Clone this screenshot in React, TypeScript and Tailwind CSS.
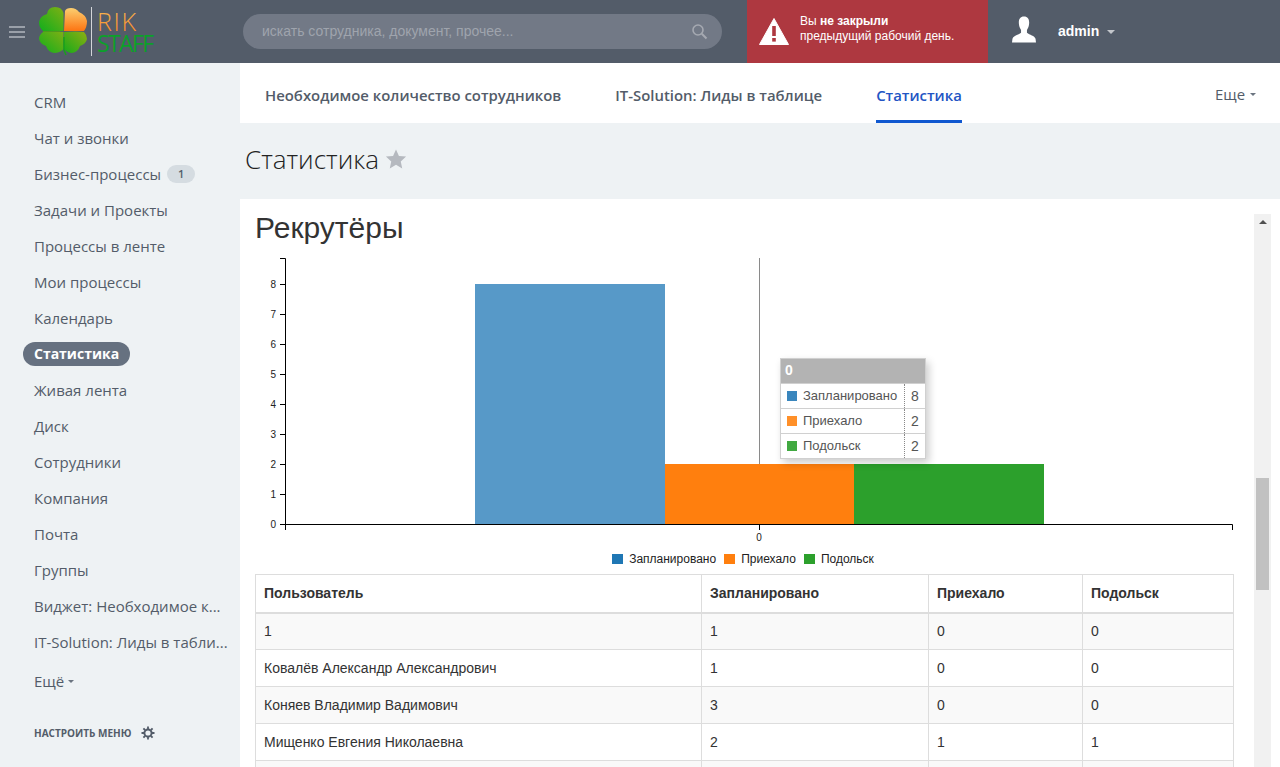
import React from "react";

const menu: { label: string; badge?: string; active?: boolean }[] = [
  { label: "CRM" },
  { label: "Чат и звонки" },
  { label: "Бизнес-процессы", badge: "1" },
  { label: "Задачи и Проекты" },
  { label: "Процессы в ленте" },
  { label: "Мои процессы" },
  { label: "Календарь" },
  { label: "Статистика", active: true },
  { label: "Живая лента" },
  { label: "Диск" },
  { label: "Сотрудники" },
  { label: "Компания" },
  { label: "Почта" },
  { label: "Группы" },
  { label: "Виджет: Необходимое к..." },
  { label: "IT-Solution: Лиды в табли..." },
];

const rows = [
  ["1", "1", "0", "0"],
  ["Ковалёв Александр Александрович", "1", "0", "0"],
  ["Коняев Владимир Вадимович", "3", "0", "0"],
  ["Мищенко Евгения Николаевна", "2", "1", "1"],
];

function Logo() {
  return (
    <svg width="124" height="58" viewBox="0 0 124 58" className="shrink-0">
      <defs>
        <linearGradient id="g1" x1="0" y1="1" x2="1" y2="0">
          <stop offset="0" stopColor="#0fae1c" />
          <stop offset="1" stopColor="#7fb014" />
        </linearGradient>
        <linearGradient id="g3" x1="0" y1="1" x2="1" y2="0">
          <stop offset="0" stopColor="#16ab1a" />
          <stop offset="1" stopColor="#8fae12" />
        </linearGradient>
        <linearGradient id="g2" x1="0" y1="0" x2="0" y2="1">
          <stop offset="0" stopColor="#fbcf70" />
          <stop offset="1" stopColor="#fd7412" />
        </linearGradient>
        <linearGradient id="g4" x1="0" y1="0" x2="0" y2="1">
          <stop offset="0" stopColor="#f9c25a" />
          <stop offset="1" stopColor="#f97f1c" />
        </linearGradient>
      </defs>
      <path d="M25.5 28 L25.5 10 Q24 4 17 4 Q10 4 9 11 Q2 13 1 19 Q1 25 5 28 Q12 29 25.5 28 Z" fill="url(#g1)" />
      <path d="M26 28 L27 8 Q28 5 33 5 Q38 5 41 9 Q48 12 49 18 Q49 24 46 28 Z" fill="url(#g2)" />
      <path d="M25.5 29 Q12 28 5 29 Q1 32 1 36 Q2 41 8 43 Q10 49 16 50 Q22 50 25.5 46 Z" fill="url(#g1)" />
      <path d="M26 29 Q38 28 46 29 Q49 32 49 36 Q48 41 42 43 Q40 49 34 50 Q30 50 26 46 Z" fill="url(#g3)" />
      <path d="M5 28.5 H22" stroke="#4f9a1d" strokeWidth="1" />
      <path d="M26 34 L26 47 L28 52" stroke="#17a31b" strokeWidth="1.5" fill="none" />
      <rect x="53" y="4" width="1" height="49" fill="#d3d5d9" />
      <text x="59" y="27.5" fontFamily="'Open Sans', sans-serif" fontSize="25" textLength="39" lengthAdjust="spacing" fill="url(#g4)" fontWeight="300">RIK</text>
      <text x="59" y="48.5" fontFamily="'Open Sans', sans-serif" fontSize="23" textLength="57" lengthAdjust="spacing" fill="#0ca02a">STAFF</text>
    </svg>
  );
}

function Chart() {
  const ys = [0, 1, 2, 3, 4, 5, 6, 7, 8];
  const yOf = (n: number) => 524 - n * 30;
  return (
    <svg width="1000" height="290" viewBox="240 258 1000 290" className="block" fontFamily="'Liberation Sans', sans-serif" fontSize="10">
      <rect x="475" y="284" width="190" height="240" fill="#5799c8" />
      <rect x="665" y="464" width="189" height="60" fill="#ff7f0e" />
      <rect x="854" y="464" width="190" height="60" fill="#2ca02c" />
      <line x1="759.5" y1="258" x2="759.5" y2="464" stroke="#8a8a8a" strokeWidth="1" />
      <path d="M280 258.5 H285.5 V524.5 H1232.5 V530" stroke="#000" strokeWidth="1" fill="none" />
      <path d="M285.5 524 V530 M759.5 524 V530" stroke="#000" strokeWidth="1" fill="none" />
      {ys.map((n) => (
        <g key={n}>
          <line x1="280" x2="285" y1={yOf(n) + 0.5} y2={yOf(n) + 0.5} stroke="#000" />
          <text x="276" y={yOf(n) + 3.5} textAnchor="end" fill="#222">{n}</text>
        </g>
      ))}
      <text x="759" y="541" textAnchor="middle" fill="#222">0</text>
    </svg>
  );
}

function Legend() {
  const items = [
    ["Запланировано", "bg-[#1f77b4]"],
    ["Приехало", "bg-[#ff7f0e]"],
    ["Подольск", "bg-[#2ca02c]"],
  ];
  return (
    <div className="mt-[4px] flex justify-center gap-[8px] pr-[3px] text-[12px] leading-[14px] text-[#222] h-[14px]">
      {items.map(([t, c]) => (
        <div key={t} className="flex items-center gap-[6px]">
          <span className={`w-[11px] h-[10px] ${c}`} />
          <span>{t}</span>
        </div>
      ))}
    </div>
  );
}

function Tooltip() {
  const items = [
    ["Запланировано", "8", "bg-[#3a86bd]"],
    ["Приехало", "2", "bg-[#ff9029]"],
    ["Подольск", "2", "bg-[#41a941]"],
  ];
  return (
    <div className="absolute left-[525px] top-[145px] w-[146px] border border-[#d0d0d0] bg-white shadow-[3px_4px_8px_rgba(0,0,0,0.2)] text-[13px] text-[#555]">
      <div className="h-[24px] bg-[#b3b3b3] px-[4px] text-white font-bold text-[14px] leading-[23px]">0</div>
      {items.map(([t, v, c]) => (
        <div key={t} className="flex h-[25px] border-t border-[#d0d0d0] items-center">
          <div className="w-[124px] flex items-center pl-[6px] gap-[6px] h-full border-r border-dotted border-[#888]">
            <span className={`w-[10px] h-[10px] ${c}`} />
            <span>{t}</span>
          </div>
          <div className="flex-1 pl-[6px] text-[14px]">{v}</div>
        </div>
      ))}
    </div>
  );
}

export default function App() {
  return (
    <div className="w-[1280px] h-[767px] overflow-hidden bg-[#eef2f4] font-['Liberation_Sans',sans-serif] flex flex-col">
      <header className="h-[63px] shrink-0 bg-[#535c69] flex items-center">
        <div className="w-[38px] pl-[9px] flex flex-col gap-[3px] shrink-0">
          <span className="block w-[16px] h-[2px] bg-[#9aa0a9]" />
          <span className="block w-[16px] h-[2px] bg-[#9aa0a9]" />
          <span className="block w-[16px] h-[2px] bg-[#9aa0a9]" />
        </div>
        <div className="w-[205px] shrink-0"><Logo /></div>
        <div className="w-[479px] h-[35px] shrink-0 rounded-full bg-[#727986] flex items-center justify-between pl-[19px] pr-[14px] text-[14px] text-[#9fa4ad]">
          <span>искать сотрудника, документ, прочее...</span>
          <svg width="17" height="17" viewBox="0 0 17 17" fill="none" stroke="#a5a9b1" strokeWidth="1.6">
            <circle cx="7" cy="7" r="5" />
            <path d="M10.8 10.8 L15.5 15.5" strokeWidth="2" />
          </svg>
        </div>
        <div className="ml-[25px] w-[241px] h-full shrink-0 bg-[#ae3840] flex items-center text-white text-[12px] leading-[15px]">
          <svg width="30" height="27" viewBox="0 0 30 27" className="ml-[12px] shrink-0">
            <path d="M15 0.5 L29.5 26.5 H0.5 Z" fill="#fff" stroke="#fff" strokeLinejoin="round" />
            <rect x="13.2" y="8" width="3.6" height="10" fill="#ae3840" />
            <rect x="13.2" y="20" width="3.6" height="3.6" fill="#ae3840" />
          </svg>
          <div className="ml-[11px] -mt-[6px]">
            <div>Вы <b>не закрыли</b></div>
            <div>предыдущий рабочий день.</div>
          </div>
        </div>
        <svg width="24" height="27" viewBox="0 0 26 28" className="ml-[24px] shrink-0 -mt-[4px]">
          <path d="M13 0 C8.5 0 7 3.5 7.5 8 C7.8 11 8.8 13 9.8 14.5 L9.8 17.5 C7 20 1.5 20.5 0.5 24 L0 28 H26 L25.5 24 C24.5 20.5 19 20 16.2 17.5 L16.2 14.5 C17.2 13 18.2 11 18.5 8 C19 3.5 17.5 0 13 0 Z" fill="#fff" />
        </svg>
        <span className="ml-[22px] text-[14px] font-bold text-white -mt-[1px]">admin</span>
        <span className="ml-[8px] w-0 h-0 border-x-[4px] border-x-transparent border-t-[4px] border-t-[#c3c6cb]" />
      </header>

      <div className="flex flex-1 min-h-0">
        <aside className="w-[240px] shrink-0 pt-[21px] font-['Open_Sans',sans-serif] text-[15px] text-[#535c69]">
          {menu.map((m) => (
            <div key={m.label} className="h-[36px] flex items-center pl-[34px] whitespace-nowrap">
              {m.active ? (
                <span className="-ml-[11px] -mt-[1px] h-[24px] px-[11px] rounded-full bg-[#667180] text-white font-bold text-[14px] leading-[23px]">{m.label}</span>
              ) : (
                <span>{m.label}</span>
              )}
              {m.badge && (
                <span className="ml-[6px] w-[28px] h-[18px] rounded-full bg-[#d5dce1] text-[11px] font-semibold text-center leading-[18px]">{m.badge}</span>
              )}
            </div>
          ))}
          <div className="mt-[3px] h-[36px] flex items-center pl-[34px]">
            <span>Ещё</span>
            <span className="ml-[4px] w-0 h-0 border-x-[3px] border-x-transparent border-t-[3px] border-t-[#6b7480]" />
          </div>
          <div className="mt-[24px] flex items-center pl-[34px] h-[20px] text-[10px] font-bold text-[#535c69]">
            <span>НАСТРОИТЬ МЕНЮ</span>
            <svg width="14" height="14" viewBox="0 0 14 14" className="ml-[10px]" fill="none" stroke="#535c69">
              <circle cx="7" cy="7" r="3.6" strokeWidth="2" />
              <path d="M7 0.5 V3 M7 11 V13.5 M0.5 7 H3 M11 7 H13.5 M2.4 2.4 L4 4 M10 10 L11.6 11.6 M2.4 11.6 L4 10 M10 4 L11.6 2.4" strokeWidth="1.8" />
            </svg>
          </div>
        </aside>

        <main className="flex-1 min-w-0 flex flex-col">
          <nav className="h-[60px] shrink-0 bg-white flex items-stretch pl-[25px] pr-[24px] font-['Open_Sans',sans-serif] text-[14.9px] font-semibold text-[#535c69]">
            <span className="flex items-center pt-[6px] border-b-2 border-transparent">Необходимое количество сотрудников</span>
            <span className="ml-[54px] flex items-center pt-[6px] border-b-2 border-transparent">IT-Solution: Лиды в таблице</span>
            <span className="ml-[54px] flex items-center pt-[7px] text-[#2255c4] border-b-[3px] border-[#1058d0]">Статистика</span>
            <span className="ml-auto font-normal flex items-center pt-[4px] border-b-2 border-transparent">
              Еще
              <span className="ml-[5px] w-0 h-0 border-x-[3px] border-x-transparent border-t-[3px] border-t-[#6b7480]" />
            </span>
          </nav>
          <div className="h-[76px] shrink-0 flex items-center pl-[5px] pb-[4px] font-['Open_Sans',sans-serif] text-[26px] font-light text-[#222]">
            <span>Статистика</span>
            <svg width="22" height="22" viewBox="0 0 24 24" className="ml-[6px]" fill="#b5b9bf">
              <path d="M12 1.5 L15.2 8.6 L23 9.4 L17.2 14.6 L18.8 22.3 L12 18.4 L5.2 22.3 L6.8 14.6 L1 9.4 L8.8 8.6 Z" />
            </svg>
          </div>
          <div className="flex-1 min-h-0 bg-white flex pl-[15px] pt-[14px] overflow-hidden">
            <div className="w-[979px] shrink-0 relative">
              <h1 className="text-[30px] leading-[30px] text-[#333] font-normal">Рекрутёры</h1>
              <div className="-ml-[15px] mt-[15px]"><Chart /></div>
              <Tooltip />
              <Legend />
              <table className="mt-[8px] w-[979px] border-collapse text-[14px] text-[#333] table-fixed">
                <colgroup>
                  <col className="w-[446px]" />
                  <col className="w-[227px]" />
                  <col className="w-[154px]" />
                  <col className="w-[151px]" />
                </colgroup>
                <thead>
                  <tr className="h-[38px] font-bold">
                    {["Пользователь", "Запланировано", "Приехало", "Подольск"].map((h) => (
                      <th key={h} className="border border-[#ddd] border-b-2 px-[8px] text-left">{h}</th>
                    ))}
                  </tr>
                </thead>
                <tbody>
                  {rows.map((r, i) => (
                    <tr key={i} className={`h-[37px] ${i % 2 === 0 ? "bg-[#f9f9f9]" : ""}`}>
                      {r.map((c, j) => (
                        <td key={j} className="border border-[#ddd] px-[8px]">{c}</td>
                      ))}
                    </tr>
                  ))}
                  <tr className="h-[37px] bg-[#f9f9f9]"><td className="border border-[#ddd]" /><td className="border border-[#ddd]" /><td className="border border-[#ddd]" /><td className="border border-[#ddd]" /></tr>
                </tbody>
              </table>
            </div>
            <div className="ml-[20px] mt-[1px] w-[17px] shrink-0 bg-[#f1f1f1] flex flex-col items-center relative">
              <span className="mt-[6px] w-0 h-0 border-x-[4px] border-x-transparent border-b-[4px] border-b-[#505050]" />
              <span className="absolute left-[2px] top-[264px] w-[13px] h-[112px] bg-[#c1c1c1]" />
            </div>
          </div>
        </main>
      </div>
    </div>
  );
}
